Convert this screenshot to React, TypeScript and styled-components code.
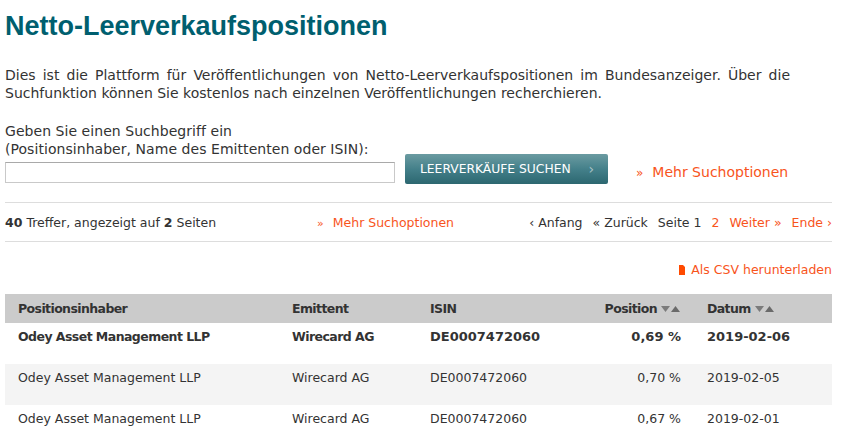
import styled, { createGlobalStyle } from 'styled-components';

const GlobalStyle = createGlobalStyle`
  html, body {
    margin: 0;
    padding: 0;
    background: #ffffff;
  }
  body {
    font-family: "DejaVu Sans", Verdana, sans-serif;
    font-size: 12.5px;
    color: #333333;
  }
`;

const ORANGE = '#f8541c';

const Page = styled.div`
  padding: 0 10px 0 5px;
`;

const Title = styled.h1`
  font-family: "Liberation Sans", Arial, sans-serif;
  font-size: 27px;
  font-weight: bold;
  color: #005f6f;
  margin: 11px 0 0 0;
  line-height: 31px;
`;

const Intro = styled.p`
  margin: 24px 0 0 0;
  width: 785px;
  font-size: 14px;
  line-height: 18px;
  text-align: justify;
`;

const Label = styled.label`
  display: block;
  margin-top: 20px;
  font-size: 14px;
  line-height: 18px;
  letter-spacing: 0.05px;
`;

const SearchRow = styled.div`
  display: flex;
  align-items: flex-end;
  margin-top: -4px;
`;

const SearchInput = styled.input`
  box-sizing: border-box;
  width: 390px;
  height: 21px;
  border: 1px solid #c9c9c9;
  border-top-color: #a9a9a9;
  padding: 0 4px;
  margin: 0 10px 1px 0;
  font: inherit;
`;

const SearchButton = styled.button`
  box-sizing: border-box;
  width: 203px;
  height: 30px;
  border: none;
  border-radius: 2px;
  background: linear-gradient(to bottom, #6b9ba1 0%, #44808a 50%, #2c6770 100%);
  color: #ffffff;
  font-family: "DejaVu Sans", Verdana, sans-serif;
  font-size: 12.3px;
  text-align: left;
  padding: 0 0 0 15px;
  display: flex;
  align-items: center;
  justify-content: space-between;
  cursor: pointer;
`;

const ButtonArrow = styled.span`
  color: #a8c2c6;
  font-size: 14px;
  margin-right: 14px;
`;

const MoreLink = styled.a<{ $big?: boolean }>`
  color: ${ORANGE};
  text-decoration: none;
  font-size: ${(p) => (p.$big ? '14px' : '12.5px')};
  margin-left: ${(p) => (p.$big ? '28px' : '0')};
  margin-bottom: ${(p) => (p.$big ? '4px' : '0')};
  white-space: nowrap;

  span {
    font-size: ${(p) => (p.$big ? '12px' : '11px')};
    margin-right: 9px;
  }
`;

const ResultBar = styled.div`
  display: grid;
  grid-template-columns: 312px 1fr auto;
  align-items: center;
  height: 38px;
  margin-top: 18px;
  border-top: 1px solid #dddddd;
  border-bottom: 1px solid #dddddd;
`;

const Pager = styled.div`
  display: flex;
  gap: 10px;
  white-space: nowrap;
`;

const PagerItem = styled.a<{ $active?: boolean }>`
  color: ${(p) => (p.$active ? ORANGE : '#333333')};
  text-decoration: none;
`;

const CsvRow = styled.div`
  display: flex;
  justify-content: flex-end;
  margin-top: 20px;
`;

const CsvLink = styled.a`
  color: ${ORANGE};
  text-decoration: none;
  display: flex;
  align-items: center;
  gap: 6px;
`;

const Table = styled.table`
  width: 827px;
  border-collapse: collapse;
  table-layout: fixed;
  margin-top: 17px;
`;

const Th = styled.th<{ $right?: boolean }>`
  background: #cbcbcb;
  font-weight: bold;
  letter-spacing: -0.6px;
  text-align: ${(p) => (p.$right ? 'right' : 'left')};
  height: 29px;
  padding: 0 13px;
  color: #333333;
  white-space: nowrap;
`;

const Tr = styled.tr<{ $bold?: boolean; $shade?: boolean }>`
  background: ${(p) => (p.$shade ? '#f4f4f4' : '#ffffff')};
  font-weight: ${(p) => (p.$bold ? 'bold' : 'normal')};
`;

const Td = styled.td<{ $right?: boolean; $digits?: boolean; $bold?: boolean }>`
  height: 41px;
  box-sizing: border-box;
  padding: 6px 13px 0 13px;
  vertical-align: top;
  text-align: ${(p) => (p.$right ? 'right' : 'left')};
  white-space: nowrap;
  font-size: ${(p) => (p.$bold && p.$digits ? '13px' : '12.5px')};
  letter-spacing: ${(p) => (p.$bold && !p.$digits ? '-0.55px' : '0')};
`;

function SortIcon() {
  return (
    <svg width="20" height="8" viewBox="0 0 20 8" style={{ marginLeft: 4 }}>
      <polygon points="0,1 9,1 4.5,7" fill="#7b7b7b" />
      <polygon points="10,7 19,7 14.5,1" fill="#6a6a6a" />
    </svg>
  );
}

function FileIcon() {
  return (
    <svg width="6" height="10" viewBox="0 0 6 10">
      <path d="M0 0 H4 L6 2 V10 H0 Z" fill="#ff4a00" />
    </svg>
  );
}

const rows = [
  { holder: 'Odey Asset Management LLP', issuer: 'Wirecard AG', isin: 'DE0007472060', pos: '0,69 %', date: '2019-02-06' },
  { holder: 'Odey Asset Management LLP', issuer: 'Wirecard AG', isin: 'DE0007472060', pos: '0,70 %', date: '2019-02-05' },
  { holder: 'Odey Asset Management LLP', issuer: 'Wirecard AG', isin: 'DE0007472060', pos: '0,67 %', date: '2019-02-01' },
];

export default function App() {
  return (
    <Page>
      <GlobalStyle />
      <Title>Netto-Leerverkaufspositionen</Title>
      <Intro>
        Dies ist die Plattform für Veröffentlichungen von Netto-Leerverkaufspositionen im Bundesanzeiger. Über die
        Suchfunktion können Sie kostenlos nach einzelnen Veröffentlichungen recherchieren.
      </Intro>
      <Label htmlFor="q">
        Geben Sie einen Suchbegriff ein
        <br />
        (Positionsinhaber, Name des Emittenten oder ISIN):
      </Label>
      <SearchRow>
        <SearchInput id="q" type="text" />
        <SearchButton>
          LEERVERKÄUFE SUCHEN
          <ButtonArrow>›</ButtonArrow>
        </SearchButton>
        <MoreLink $big href="#">
          <span>»</span>Mehr Suchoptionen
        </MoreLink>
      </SearchRow>

      <ResultBar>
        <div>
          <b>40</b> Treffer, angezeigt auf <b>2</b> Seiten
        </div>
        <div>
          <MoreLink href="#">
            <span>»</span>Mehr Suchoptionen
          </MoreLink>
        </div>
        <Pager>
          <PagerItem href="#">‹ Anfang</PagerItem>
          <PagerItem href="#">« Zurück</PagerItem>
          <PagerItem as="span">Seite 1</PagerItem>
          <PagerItem $active href="#">2</PagerItem>
          <PagerItem $active href="#">Weiter »</PagerItem>
          <PagerItem $active href="#">Ende ›</PagerItem>
        </Pager>
      </ResultBar>

      <CsvRow>
        <CsvLink href="#">
          <FileIcon />
          Als CSV herunterladen
        </CsvLink>
      </CsvRow>

      <Table>
        <colgroup>
          <col style={{ width: 274 }} />
          <col style={{ width: 138 }} />
          <col style={{ width: 143 }} />
          <col style={{ width: 134 }} />
          <col style={{ width: 138 }} />
        </colgroup>
        <thead>
          <tr>
            <Th>Positionsinhaber</Th>
            <Th>Emittent</Th>
            <Th>ISIN</Th>
            <Th $right>
              Position
              <SortIcon />
            </Th>
            <Th>
              Datum
              <SortIcon />
            </Th>
          </tr>
        </thead>
        <tbody>
          {rows.map((r, i) => {
            const bold = i === 0;
            return (
              <Tr key={i} $bold={bold} $shade={i % 2 === 1}>
                <Td $bold={bold}>{r.holder}</Td>
                <Td $bold={bold}>{r.issuer}</Td>
                <Td $bold={bold} $digits>{r.isin}</Td>
                <Td $bold={bold} $digits $right>{r.pos}</Td>
                <Td $bold={bold} $digits>{r.date}</Td>
              </Tr>
            );
          })}
        </tbody>
      </Table>
    </Page>
  );
}
